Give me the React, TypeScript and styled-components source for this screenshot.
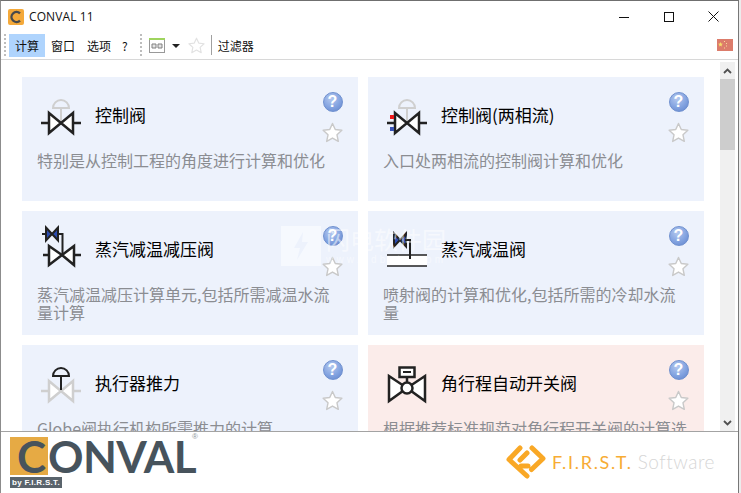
import React from 'react'
import styled, { createGlobalStyle } from 'styled-components'

const GlobalStyle = createGlobalStyle`
  html, body {
    margin: 0;
    padding: 0;
    background: #ececec;
    overflow: hidden;
  }
  * { box-sizing: border-box; }
`

const CJK = `"Noto Sans CJK SC", "Noto Sans", sans-serif`

const Frame = styled.div`
  width: 741px;
  height: 493px;
  display: flex;
  overflow: hidden;
`
const Win = styled.div`
  width: 739px;
  height: 493px;
  display: flex;
  flex-direction: column;
  background: #fff;
  border-top: 1px solid #6f6f6f;
  border-left: 1px solid #8c8c8c;
  border-right: 1px solid #777;
  font-family: ${CJK};
`
const TitleBar = styled.div`
  height: 31px;
  flex: none;
  display: flex;
  align-items: center;
  padding: 0 2px 0 7px;
`
const AppIcon = styled.div`
  width: 16px;
  height: 16px;
  border-radius: 2px;
  background: #f4a93a;
  display: flex;
  align-items: center;
  justify-content: center;
`
const AppName = styled.span`
  margin-left: 5px;
  font: 12px/16px "Open Sans", sans-serif;
  color: #111;
  letter-spacing: 0.1px;
`
const WinControls = styled.div`
  margin-left: auto;
  display: flex;
`
const WinButton = styled.div`
  width: 45px;
  height: 31px;
  display: flex;
  align-items: center;
  justify-content: center;
`
const Toolbar = styled.div`
  height: 28px;
  flex: none;
  display: flex;
  align-items: center;
  padding: 0 5px 1px 3px;
  border-bottom: 1px solid #d8d8d8;
`
const Gripper = styled.div<{ $gap?: number }>`
  width: 2px;
  height: 22px;
  margin: 0 ${p => p.$gap ?? 3}px 0 ${p => (p.$gap ? 7 : 0)}px;
  background: repeating-linear-gradient(to bottom, #bdbdbd 0 2px, transparent 2px 4px);
`
const MenuItem = styled.div<{ $active?: boolean; $narrow?: boolean }>`
  height: 23px;
  padding: 0 ${p => (p.$narrow ? 5 : 6)}px;
  font-size: 12px;
  line-height: 23px;
  color: #111;
  background: ${p => (p.$active ? '#afd4fd' : 'transparent')};
`
const FilterLabel = styled.span`
  font-size: 12px;
  line-height: 23px;
  color: #111;
`
const Caret = styled.div`
  width: 0;
  height: 0;
  margin: 1px 8px 0 7px;
  border-left: 4px solid transparent;
  border-right: 4px solid transparent;
  border-top: 4px solid #222;
`
const ToolSep = styled.div`
  width: 1px;
  height: 20px;
  margin: 0 6px;
  background: #a0a0a0;
`
const Flag = styled.div`
  margin-left: auto;
  width: 16px;
  height: 12px;
  background: #dc7c6b;
  display: flex;
`
const Body = styled.div`
  flex: 1;
  min-height: 0;
  display: flex;
  position: relative;
`
const Scroller = styled.div`
  width: 719px;
  overflow: hidden;
  padding: 17px 0 0 21px;
`
const Grid = styled.div`
  display: grid;
  grid-template-columns: 336px 336px;
  grid-auto-rows: 124px;
  gap: 10px;
`
const Card = styled.div<{ $pink?: boolean }>`
  padding: 11px 15px 0 15px;
  background: ${p => (p.$pink ? '#fbecea' : '#edf2fc')};
`
const CardHead = styled.div`
  height: 64px;
  display: flex;
  align-items: flex-start;
`
const CardTitle = styled.div`
  margin: 15px 0 0 10px;
  font-size: 17px;
  line-height: 24px;
  color: #000;
  white-space: nowrap;
`
const CardActions = styled.div`
  margin: 4px 0 0 auto;
  display: flex;
  flex-direction: column;
  align-items: center;
  gap: 10px;
`
const HelpBadge = styled.div`
  width: 20px;
  height: 20px;
  border-radius: 50%;
  border: 1px solid #6f90cf;
  background: radial-gradient(circle at 40% 30%, #b5c9ef 0%, #83a3e0 55%, #5f83cb 100%);
  color: #fff;
  font: bold 16px/18px "Liberation Sans", sans-serif;
  text-align: center;
`
const CardDesc = styled.div`
  width: 306px;
  font-size: 16px;
  line-height: 17.5px;
  color: #8b8d92;
`
const Scrollbar = styled.div`
  width: 15px;
  margin-top: 2px;
  flex: none;
  display: flex;
  flex-direction: column;
  background: #f0f0f0;
`
const ScrollButton = styled.div`
  height: 17px;
  flex: none;
  display: flex;
  align-items: center;
  justify-content: center;
`
const ScrollThumb = styled.div`
  height: 71px;
  flex: none;
  background: #cdcdcd;
`
const ScrollSpace = styled.div`
  flex: 1;
`
const Watermark = styled.div`
  position: absolute;
  left: 280px;
  top: 166px;
  display: flex;
  gap: 5px;
  pointer-events: none;
`
const WatermarkLogo = styled.div`
  width: 40px;
  height: 40px;
  background: rgba(255, 255, 255, 0.5);
  display: flex;
  align-items: center;
  justify-content: center;
`
const WatermarkText = styled.div`
  color: rgba(255, 255, 255, 0.5);
  font-size: 24px;
  line-height: 26px;
  white-space: nowrap;
`
const WatermarkUrl = styled.div`
  font: 10px/12px "Liberation Sans", sans-serif;
  letter-spacing: 3.2px;
  margin-top: 2px;
`
const Footer = styled.div`
  height: 62px;
  flex: none;
  display: flex;
  align-items: flex-start;
  justify-content: space-between;
  border-top: 1px solid #a3a3a3;
  background: #fff;
  padding: 0 23px 0 9px;
`
const ConvalLogo = styled.div`
  position: relative;
  width: 190px;
  padding-top: 5px;
`
const LogoMark = styled.div`
  display: flex;
  align-items: center;
  height: 38px;
`
const LogoC = styled.div`
  width: 38px;
  height: 38px;
  padding-right: 2px;
  background: #e6aa44;
  color: #47535c;
  font: 700 44px/38px Lato, sans-serif;
  text-align: right;
`
const LogoWord = styled.div`
  color: #47535c;
  font: 700 44px/38px Lato, sans-serif;
  letter-spacing: -0.6px;
`
const LogoReg = styled.span`
  position: absolute;
  left: 182px;
  top: 1px;
  font: 8px/8px "Liberation Sans", sans-serif;
  color: #8f979c;
`
const LogoBy = styled.div`
  width: 52px;
  height: 11px;
  margin-top: 2px;
  background: #5a646c;
  color: #fff;
  font: bold 8px/11px "Liberation Sans", sans-serif;
  letter-spacing: 0.3px;
  text-align: center;
`
const FirstLogo = styled.div`
  display: flex;
  align-items: center;
  height: 36px;
  margin-top: 12px;
`
const FirstName = styled.span`
  margin-left: 6px;
  font: 400 18px/24px Lato, sans-serif;
  letter-spacing: 1.7px;
  color: #f7ac34;
`
const FirstSoft = styled.span`
  margin-left: 5px;
  font: 300 19px/24px Lato, sans-serif;
  letter-spacing: 0.5px;
  color: #d6d6d6;
`

const DARK = '#222'
const GREY = '#cfcfcf'

const ValveBody = ({ color = DARK }: { color?: string }) => (
  <g stroke={color} strokeWidth={2.5} fill="#fff">
    <path d="M4 35H12M36 35H44" fill="none" />
    <path d="M12 25L24 35L12 45Z" />
    <path d="M36 25L24 35L36 45Z" />
  </g>
)

const IconSvg = styled.svg`
  width: 48px;
  height: 48px;
  flex: none;
`

const ControlValve = () => (
  <IconSvg viewBox="0 0 48 48">
    <path d="M24 20V33" stroke={GREY} strokeWidth={2} />
    <path d="M16 20A8 8 0 0 1 32 20Z" fill="none" stroke={GREY} strokeWidth={2} />
    <ValveBody />
  </IconSvg>
)

const TwoPhaseValve = () => (
  <IconSvg viewBox="0 0 48 48">
    <path d="M24 20V33" stroke={GREY} strokeWidth={2} />
    <path d="M16 20A8 8 0 0 1 32 20Z" fill="none" stroke={GREY} strokeWidth={2} />
    <ValveBody />
    <rect x="7" y="27" width="4" height="4" fill="#f01818" />
    <rect x="7" y="39" width="4" height="4" fill="#3a55b8" />
  </IconSvg>
)

const SmallValve = ({ x, y }: { x: number; y: number }) => (
  <g transform={`translate(${x} ${y})`} stroke={DARK} strokeWidth={2} fill="#2c4db0">
    <path d="M-6 -6.5L0 0L-6 6.5Z" />
    <path d="M6 -6.5L0 0L6 6.5Z" />
  </g>
)

const SteamReducer = () => (
  <IconSvg viewBox="0 0 48 48">
    <path d="M5 12H9M21 12H25.5V33" fill="none" stroke={DARK} strokeWidth={2} />
    <SmallValve x={15} y={12} />
    <g stroke={DARK} strokeWidth={2.5} fill="#fff">
      <path d="M6 33H12M37 33H44" fill="none" />
      <path d="M12 24L25 33L12 43Z" />
      <path d="M37 24L25 33L37 43Z" />
    </g>
  </IconSvg>
)

const Desuperheater = () => (
  <IconSvg viewBox="0 0 48 48">
    <rect x="4" y="33" width="40" height="11" fill="#fff" />
    <path d="M4 33H44M4 44H44" stroke={DARK} strokeWidth={1.5} fill="none" />
    <path d="M23 18H27V37" fill="none" stroke={DARK} strokeWidth={2} />
    <SmallValve x={17} y={18} />
  </IconSvg>
)

const ActuatorForce = () => (
  <IconSvg viewBox="0 0 48 48">
    <ValveBody color={GREY} />
    <path d="M24 20V34" stroke={DARK} strokeWidth={2} />
    <path d="M16 20A8 8 0 0 1 32 20Z" fill="none" stroke={DARK} strokeWidth={2} />
  </IconSvg>
)

const OnOffValve = () => (
  <IconSvg viewBox="0 0 48 48">
    <g stroke={DARK} strokeWidth={2.5} fill="#fff">
      <path d="M6 20V45L24 32Z" />
      <path d="M42 20V45L24 32Z" />
      <path d="M24 21V27" fill="none" />
      <circle cx="24" cy="32" r="5.5" />
      <rect x="16.5" y="11.5" width="15" height="9.5" />
      <path d="M20 16H28" fill="none" strokeWidth={2} />
    </g>
  </IconSvg>
)

const StarSvg = styled.svg`
  flex: none;
  display: block;
`
const Star = ({ size = 21, stroke = '#c9c9c9' }: { size?: number; stroke?: string }) => (
  <StarSvg width={size} height={size} viewBox="0 0 22 22">
    <path
      d="M11 1.5L13.9 7.9L20.8 8.7L15.7 13.4L17.1 20.3L11 16.8L4.9 20.3L6.3 13.4L1.2 8.7L8.1 7.9Z"
      fill="#fff"
      stroke={stroke}
      strokeWidth={1.5}
      strokeLinejoin="round"
    />
  </StarSvg>
)

const cards = [
  { title: '控制阀', desc: '特别是从控制工程的角度进行计算和优化', Icon: ControlValve },
  { title: '控制阀(两相流)', desc: '入口处两相流的控制阀计算和优化', Icon: TwoPhaseValve },
  { title: '蒸汽减温减压阀', desc: '蒸汽减温减压计算单元,包括所需减温水流量计算', Icon: SteamReducer },
  { title: '蒸汽减温阀', desc: '喷射阀的计算和优化,包括所需的冷却水流量', Icon: Desuperheater },
  { title: '执行器推力', desc: 'Globe阀执行机构所需推力的计算', Icon: ActuatorForce },
  { title: '角行程自动开关阀', desc: '根据推荐标准规范对角行程开关阀的计算选型', Icon: OnOffValve, pink: true },
]

export default function App() {
  return (
    <Frame>
      <GlobalStyle />
      <Win>
        <TitleBar>
          <AppIcon>
            <svg width="14" height="14" viewBox="0 0 14 14">
              <path d="M11 3.4A5 5 0 1 0 11 10.6" fill="none" stroke="#47494c" strokeWidth={2.4} />
            </svg>
          </AppIcon>
          <AppName>CONVAL 11</AppName>
          <WinControls>
            <WinButton>
              <svg width="10" height="10" viewBox="0 0 10 10"><path d="M0 5.5H10" stroke="#111" /></svg>
            </WinButton>
            <WinButton>
              <svg width="10" height="10" viewBox="0 0 10 10"><rect x=".5" y=".5" width="9" height="9" fill="none" stroke="#111" /></svg>
            </WinButton>
            <WinButton>
              <svg width="11" height="11" viewBox="0 0 11 11"><path d="M.5 .5L10.5 10.5M10.5 .5L.5 10.5" stroke="#111" /></svg>
            </WinButton>
          </WinControls>
        </TitleBar>

        <Toolbar>
          <Gripper />
          <MenuItem $active>计算</MenuItem>
          <MenuItem>窗口</MenuItem>
          <MenuItem>选项</MenuItem>
          <MenuItem $narrow>?</MenuItem>
          <Gripper $gap={7} />
          <svg width="16" height="15" viewBox="0 0 16 15">
            <rect x=".5" y="1" width="15" height="13.5" fill="#fff" stroke="#999" />
            <rect x="0" y="0" width="16" height="2" fill="#9fd45e" />
            <path d="M3 6H7V10H3ZM9 6H13V10H9Z" fill="#e4e4e4" stroke="#808080" />
          </svg>
          <Caret />
          <Star size={17} stroke="#e2e2e2" />
          <ToolSep />
          <FilterLabel>过滤器</FilterLabel>
          <Flag>
            <svg width="16" height="12" viewBox="0 0 16 12">
              <path d="M3.5 3L4.2 4.6L5.9 4.8L4.6 5.9L5 7.6L3.5 6.7L2 7.6L2.4 5.9L1.1 4.8L2.8 4.6Z" fill="#f5dc6a" />
              <path d="M7 2h1v1H7ZM9 4h1v1H9ZM9 6.5h1v1H9ZM7 8.5h1v1H7Z" fill="#f5dc9a" />
            </svg>
          </Flag>
        </Toolbar>

        <Body>
          <Scroller>
            <Grid>
              {cards.map(({ title, desc, Icon, pink }) => (
                <Card key={title} $pink={pink}>
                  <CardHead>
                    <Icon />
                    <CardTitle>{title}</CardTitle>
                    <CardActions>
                      <HelpBadge>?</HelpBadge>
                      <Star />
                    </CardActions>
                  </CardHead>
                  <CardDesc>{desc}</CardDesc>
                </Card>
              ))}
            </Grid>
          </Scroller>
          <Scrollbar>
            <ScrollButton>
              <svg width="9" height="6" viewBox="0 0 9 6"><path d="M1 5L4.5 1.5L8 5" fill="none" stroke="#505050" strokeWidth={1.8} /></svg>
            </ScrollButton>
            <ScrollThumb />
            <ScrollSpace />
            <ScrollButton>
              <svg width="9" height="6" viewBox="0 0 9 6"><path d="M1 1L4.5 4.5L8 1" fill="none" stroke="#505050" strokeWidth={1.8} /></svg>
            </ScrollButton>
          </Scrollbar>
          <Watermark>
            <WatermarkLogo>
              <svg width="20" height="30" viewBox="0 0 20 30">
                <path d="M12 1L3 17H9L6 29L17 11H11Z" fill="#edf2fc" />
              </svg>
            </WatermarkLogo>
            <WatermarkText>
              闪电软件园
              <WatermarkUrl>www.sdbeta.com</WatermarkUrl>
            </WatermarkText>
          </Watermark>
        </Body>

        <Footer>
          <ConvalLogo>
            <LogoMark>
              <LogoC>C</LogoC>
              <LogoWord>ONVAL</LogoWord>
            </LogoMark>
            <LogoReg>®</LogoReg>
            <LogoBy>by F.I.R.S.T.</LogoBy>
          </ConvalLogo>
          <FirstLogo>
            <svg width="40" height="34" viewBox="0 0 40 34">
              <path
                d="M14 3L3 14.5L21 31M26 3L37 13.5L25.5 24.5M14 15L21 8M15 21H22"
                fill="none"
                stroke="#f9a826"
                strokeWidth={5}
                strokeLinecap="round"
                strokeLinejoin="round"
              />
            </svg>
            <FirstName>F.I.R.S.T.</FirstName>
            <FirstSoft>Software</FirstSoft>
          </FirstLogo>
        </Footer>
      </Win>
    </Frame>
  )
}
